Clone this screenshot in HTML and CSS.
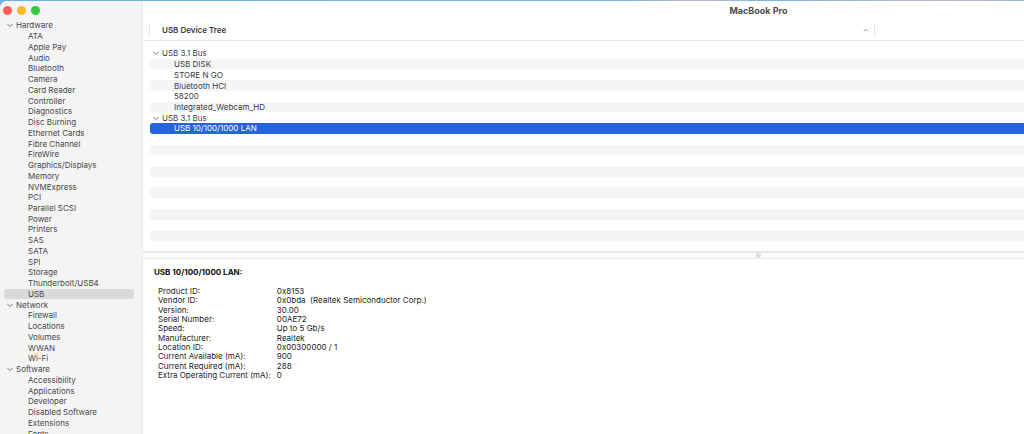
FILE: index.html
```
<!DOCTYPE html>
<html lang="en">
<head>
    <meta charset="UTF-8">
    <meta name="viewport" content="width=device-width, initial-scale=1.0">
    <title>MacBook Pro</title>
    <link rel="stylesheet" href="styles.css">
</head>
<body>
    <div class="window">
        <!-- Sidebar -->
        <aside class="sidebar">
            <div class="lights">
                <button class="light close" aria-label="Close"></button>
                <button class="light minimize" aria-label="Minimize"></button>
                <button class="light zoom" aria-label="Zoom"></button>
            </div>
            <ul class="categories">
                <li class="group"><svg class="chevron" viewBox="0 0 6 6"><path d="M0.5 2 3 4.5 5.5 2"/></svg>Hardware</li>
                <li>ATA</li>
                <li>Apple Pay</li>
                <li>Audio</li>
                <li>Bluetooth</li>
                <li>Camera</li>
                <li>Card Reader</li>
                <li>Controller</li>
                <li>Diagnostics</li>
                <li>Disc Burning</li>
                <li>Ethernet Cards</li>
                <li>Fibre Channel</li>
                <li>FireWire</li>
                <li>Graphics/Displays</li>
                <li>Memory</li>
                <li>NVMExpress</li>
                <li>PCI</li>
                <li>Parallel SCSI</li>
                <li>Power</li>
                <li>Printers</li>
                <li>SAS</li>
                <li>SATA</li>
                <li>SPI</li>
                <li>Storage</li>
                <li>Thunderbolt/USB4</li>
                <li class="current">USB</li>
                <li class="group"><svg class="chevron" viewBox="0 0 6 6"><path d="M0.5 2 3 4.5 5.5 2"/></svg>Network</li>
                <li>Firewall</li>
                <li>Locations</li>
                <li>Volumes</li>
                <li>WWAN</li>
                <li>Wi-Fi</li>
                <li class="group"><svg class="chevron" viewBox="0 0 6 6"><path d="M0.5 2 3 4.5 5.5 2"/></svg>Software</li>
                <li>Accessibility</li>
                <li>Applications</li>
                <li>Developer</li>
                <li>Disabled Software</li>
                <li>Extensions</li>
                <li>Fonts</li>
            </ul>
        </aside>

        <main class="content">
            <h1 class="title">MacBook Pro</h1>

            <div class="columns">
                <button class="column">
                    USB Device Tree
                    <svg class="sort" viewBox="0 0 6 6"><path d="M1 4 3 2.5 5 4"/></svg>
                </button>
            </div>

            <ul class="tree">
                <li class="bus"><svg class="chevron" viewBox="0 0 6 6"><path d="M0.5 2 3 4.5 5.5 2"/></svg>USB 3.1 Bus</li>
                <li>USB DISK</li>
                <li>STORE N GO</li>
                <li>Bluetooth HCI</li>
                <li>58200</li>
                <li>Integrated_Webcam_HD</li>
                <li class="bus"><svg class="chevron" viewBox="0 0 6 6"><path d="M0.5 2 3 4.5 5.5 2"/></svg>USB 3.1 Bus</li>
                <li class="selected">USB 10/100/1000 LAN</li>
                <li></li>
                <li></li>
                <li></li>
                <li></li>
                <li></li>
                <li></li>
                <li></li>
                <li></li>
                <li></li>
                <li></li>
            </ul>

            <div class="splitter"><span class="grip"></span></div>

            <!-- Details of the selected device -->
            <section class="details">
                <h2>USB 10/100/1000 LAN:</h2>
                <table>
                    <tr><th scope="row">Product ID:</th><td>0x8153</td></tr>
                    <tr><th scope="row">Vendor ID:</th><td>0x0bda&nbsp; (Realtek Semiconductor Corp.)</td></tr>
                    <tr><th scope="row">Version:</th><td>30.00</td></tr>
                    <tr><th scope="row">Serial Number:</th><td>00AE72</td></tr>
                    <tr><th scope="row">Speed:</th><td>Up to 5 Gb/s</td></tr>
                    <tr><th scope="row">Manufacturer:</th><td>Realtek</td></tr>
                    <tr><th scope="row">Location ID:</th><td>0x00300000 / 1</td></tr>
                    <tr><th scope="row">Current Available (mA):</th><td>900</td></tr>
                    <tr><th scope="row">Current Required (mA):</th><td>288</td></tr>
                    <tr><th scope="row">Extra Operating Current (mA):</th><td>0</td></tr>
                </table>
            </section>
        </main>
    </div>
</body>
</html>
```
FILE: styles.css
```
* {
    box-sizing: border-box;
}

body {
    margin: 0;
    padding-top: 1px;
    height: 100vh;
    overflow: hidden;
    background: linear-gradient(90deg, #6eaedb 0%, #7bb1da 60%, #b9b8d3 68%, #7fb5dc 75%, #bfb9d0 92%, #9fb4d6 100%);
    font-family: Inter, "Liberation Sans", sans-serif;
    font-size: 8px;
    line-height: 10px;
    color: #3c3c3c;
}

ul {
    list-style: none;
    margin: 0;
    padding: 0;
}

button {
    border: 0;
    padding: 0;
    background: none;
    font: inherit;
    color: inherit;
}

svg {
    fill: none;
    stroke: #777;
    stroke-linecap: round;
    stroke-linejoin: round;
}

.window {
    display: flex;
    height: 100%;
    border-top-left-radius: 7px;
    background: #fff;
    overflow: hidden;
}

.sidebar {
    display: flex;
    flex-direction: column;
    flex: 0 0 143px;
    background: #f4f4f4;
    border-right: 1px solid #ececec;
    color: #484848;
}

.lights {
    display: flex;
    gap: 5px;
    padding: 5px 3px;
}

.light {
    width: 9px;
    height: 9px;
    border-radius: 50%;
}

.close {
    background: #f95f57;
}

.minimize {
    background: #f8b92d;
}

.zoom {
    background: #35c840;
}

/* the last row runs past the bottom edge */
.categories {
    flex: 1;
    display: grid;
    grid-auto-rows: minmax(10px, 1fr);
    margin: 0 8px -5px 4px;
}

.categories li {
    display: flex;
    align-items: center;
    padding-left: 24px;
    border-radius: 3px;
}

.categories .group {
    padding-left: 3px;
}

.categories .current {
    background: #dadada;
}

.chevron {
    width: 6px;
    height: 6px;
    margin-right: 3px;
}

.content {
    flex: 1;
    min-width: 0;
    display: flex;
    flex-direction: column;
}

/* the window is wider than the visible area */
.title,
.splitter {
    width: calc(100% + 350px);
}

.title {
    margin: 0;
    padding: 4px 0;
    font-size: 9px;
    line-height: 12px;
    text-align: center;
    color: #4c4c4c;
}

.columns {
    padding: 3px 0 4px 6px;
    border-bottom: 1px solid #e6e6e6;
}

.column {
    display: flex;
    align-items: center;
    justify-content: space-between;
    width: 83%;
    height: 12px;
    padding: 0 5px 0 12px;
    border: solid #e6e6e6;
    border-width: 0 1px;
    font-weight: 600;
}

.sort {
    width: 6px;
    height: 6px;
    stroke: #999;
}

.tree {
    display: grid;
    grid-auto-rows: 1fr;
    height: 193px;
    margin: 7px 0 10px 7px;
}

.tree li {
    display: flex;
    align-items: center;
    padding-left: 24px;
    border-radius: 3px 0 0 3px;
}

.tree li:nth-child(even) {
    background: #f4f5f5;
}

.tree .bus {
    padding-left: 3px;
}

.tree .selected:nth-child(even) {
    background: #2563e0;
    color: #fff;
}

.splitter {
    display: flex;
    align-items: center;
    justify-content: center;
    height: 8px;
    border-top: 2px solid #e8e8e8;
    border-bottom: 1px solid #e8e8e8;
    background: #fcfcfc;
}

.grip {
    width: 5px;
    height: 5px;
    border-radius: 50%;
    background: #dcdcdc;
}

.details {
    padding: 7px 11px;
    color: #222;
}

.details h2 {
    margin: 0 0 9px;
    font-size: 8px;
    line-height: 12px;
    color: #111;
}

.details table {
    height: 93px;
    margin-left: 4px;
    border-spacing: 0;
    line-height: 9px;
}

.details th,
.details td {
    padding: 0 6px 0 0;
    font-weight: normal;
    text-align: left;
}
```
